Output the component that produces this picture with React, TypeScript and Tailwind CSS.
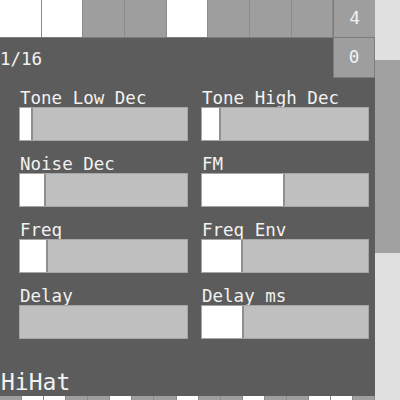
const topSteps = [true, true, false, false, true, false, false, false];
const bottomSteps = [
  false, true, true, false, false, true, false, false, true,
  false, false, true, false, false, true, true, false,
];

interface Control {
  name: string;
  fill: number;
}

const controls: Control[] = [
  { name: "Tone Low Dec", fill: 13 },
  { name: "Tone High Dec", fill: 19 },
  { name: "Noise Dec", fill: 26 },
  { name: "FM", fill: 83 },
  { name: "Freq", fill: 28 },
  { name: "Freq Env", fill: 41 },
  { name: "Delay", fill: 0 },
  { name: "Delay ms", fill: 42 },
];

function Slider({ fill }: { fill: number }) {
  return (
    <div className="flex h-[34px] w-full bg-[#bfbfbf] border border-[#a6a6a6]">
      {fill > 0 && (
        <div
          className="h-full bg-white border-r-2 border-[#8f8f8f]"
          style={{ width: fill }}
        />
      )}
    </div>
  );
}

export default function App() {
  return (
    <div
      className="flex w-[400px] h-[400px] overflow-hidden bg-[#5c5c5c] text-[#f2f2f2]"
      style={{ fontFamily: '"DejaVu Sans Mono", "Liberation Mono", monospace' }}
    >
      <div className="flex flex-col w-[375px] shrink-0">
        {/* step row */}
        <div className="grid grid-cols-9 h-[38px] shrink-0 border-b border-[#7d7d7d]">
          {topSteps.map((on, i) => (
            <div
              key={i}
              className={`border-r border-[#8a8a8a] ${on ? "bg-white" : "bg-[#9e9e9e]"}`}
            />
          ))}
          <div className="flex items-center justify-center bg-[#9e9e9e] border-l border-[#7d7d7d] text-[17.5px]">
            4
          </div>
        </div>

        {/* header row */}
        <div className="flex h-[40px] shrink-0 items-center justify-between">
          <span className="text-[17.5px] pt-[2px]">1/16</span>
          <div className="flex h-full w-[42px] items-center justify-center bg-[#9e9e9e] border-x border-b border-[#7d7d7d] text-[17.5px]">
            0
          </div>
        </div>

        {/* controls */}
        <div className="grid grid-cols-[169px_168px] gap-x-[13px] gap-y-[15px] pl-[19px] pt-[12px]">
          {controls.map((c) => (
            <div key={c.name} className="flex flex-col">
              <span className="text-[17.5px] leading-[17px] pl-[1px]">{c.name}</span>
              <Slider fill={c.fill} />
            </div>
          ))}
        </div>

        <div className="mt-auto text-[23px] leading-[27px] pl-[1px]">HiHat</div>

        {/* next step row */}
        <div className="flex h-[4px] shrink-0">
          {bottomSteps.map((on, i) => (
            <div
              key={i}
              className={`flex-1 border-r border-[#8a8a8a] ${on ? "bg-white" : "bg-[#9e9e9e]"}`}
            />
          ))}
        </div>
      </div>

      {/* scrollbar */}
      <div className="flex flex-col w-[25px] bg-[#e0e0e0]">
        <div className="h-[60px] shrink-0" />
        <div className="h-[193px] bg-[#a1a1a1]" />
      </div>
    </div>
  );
}
